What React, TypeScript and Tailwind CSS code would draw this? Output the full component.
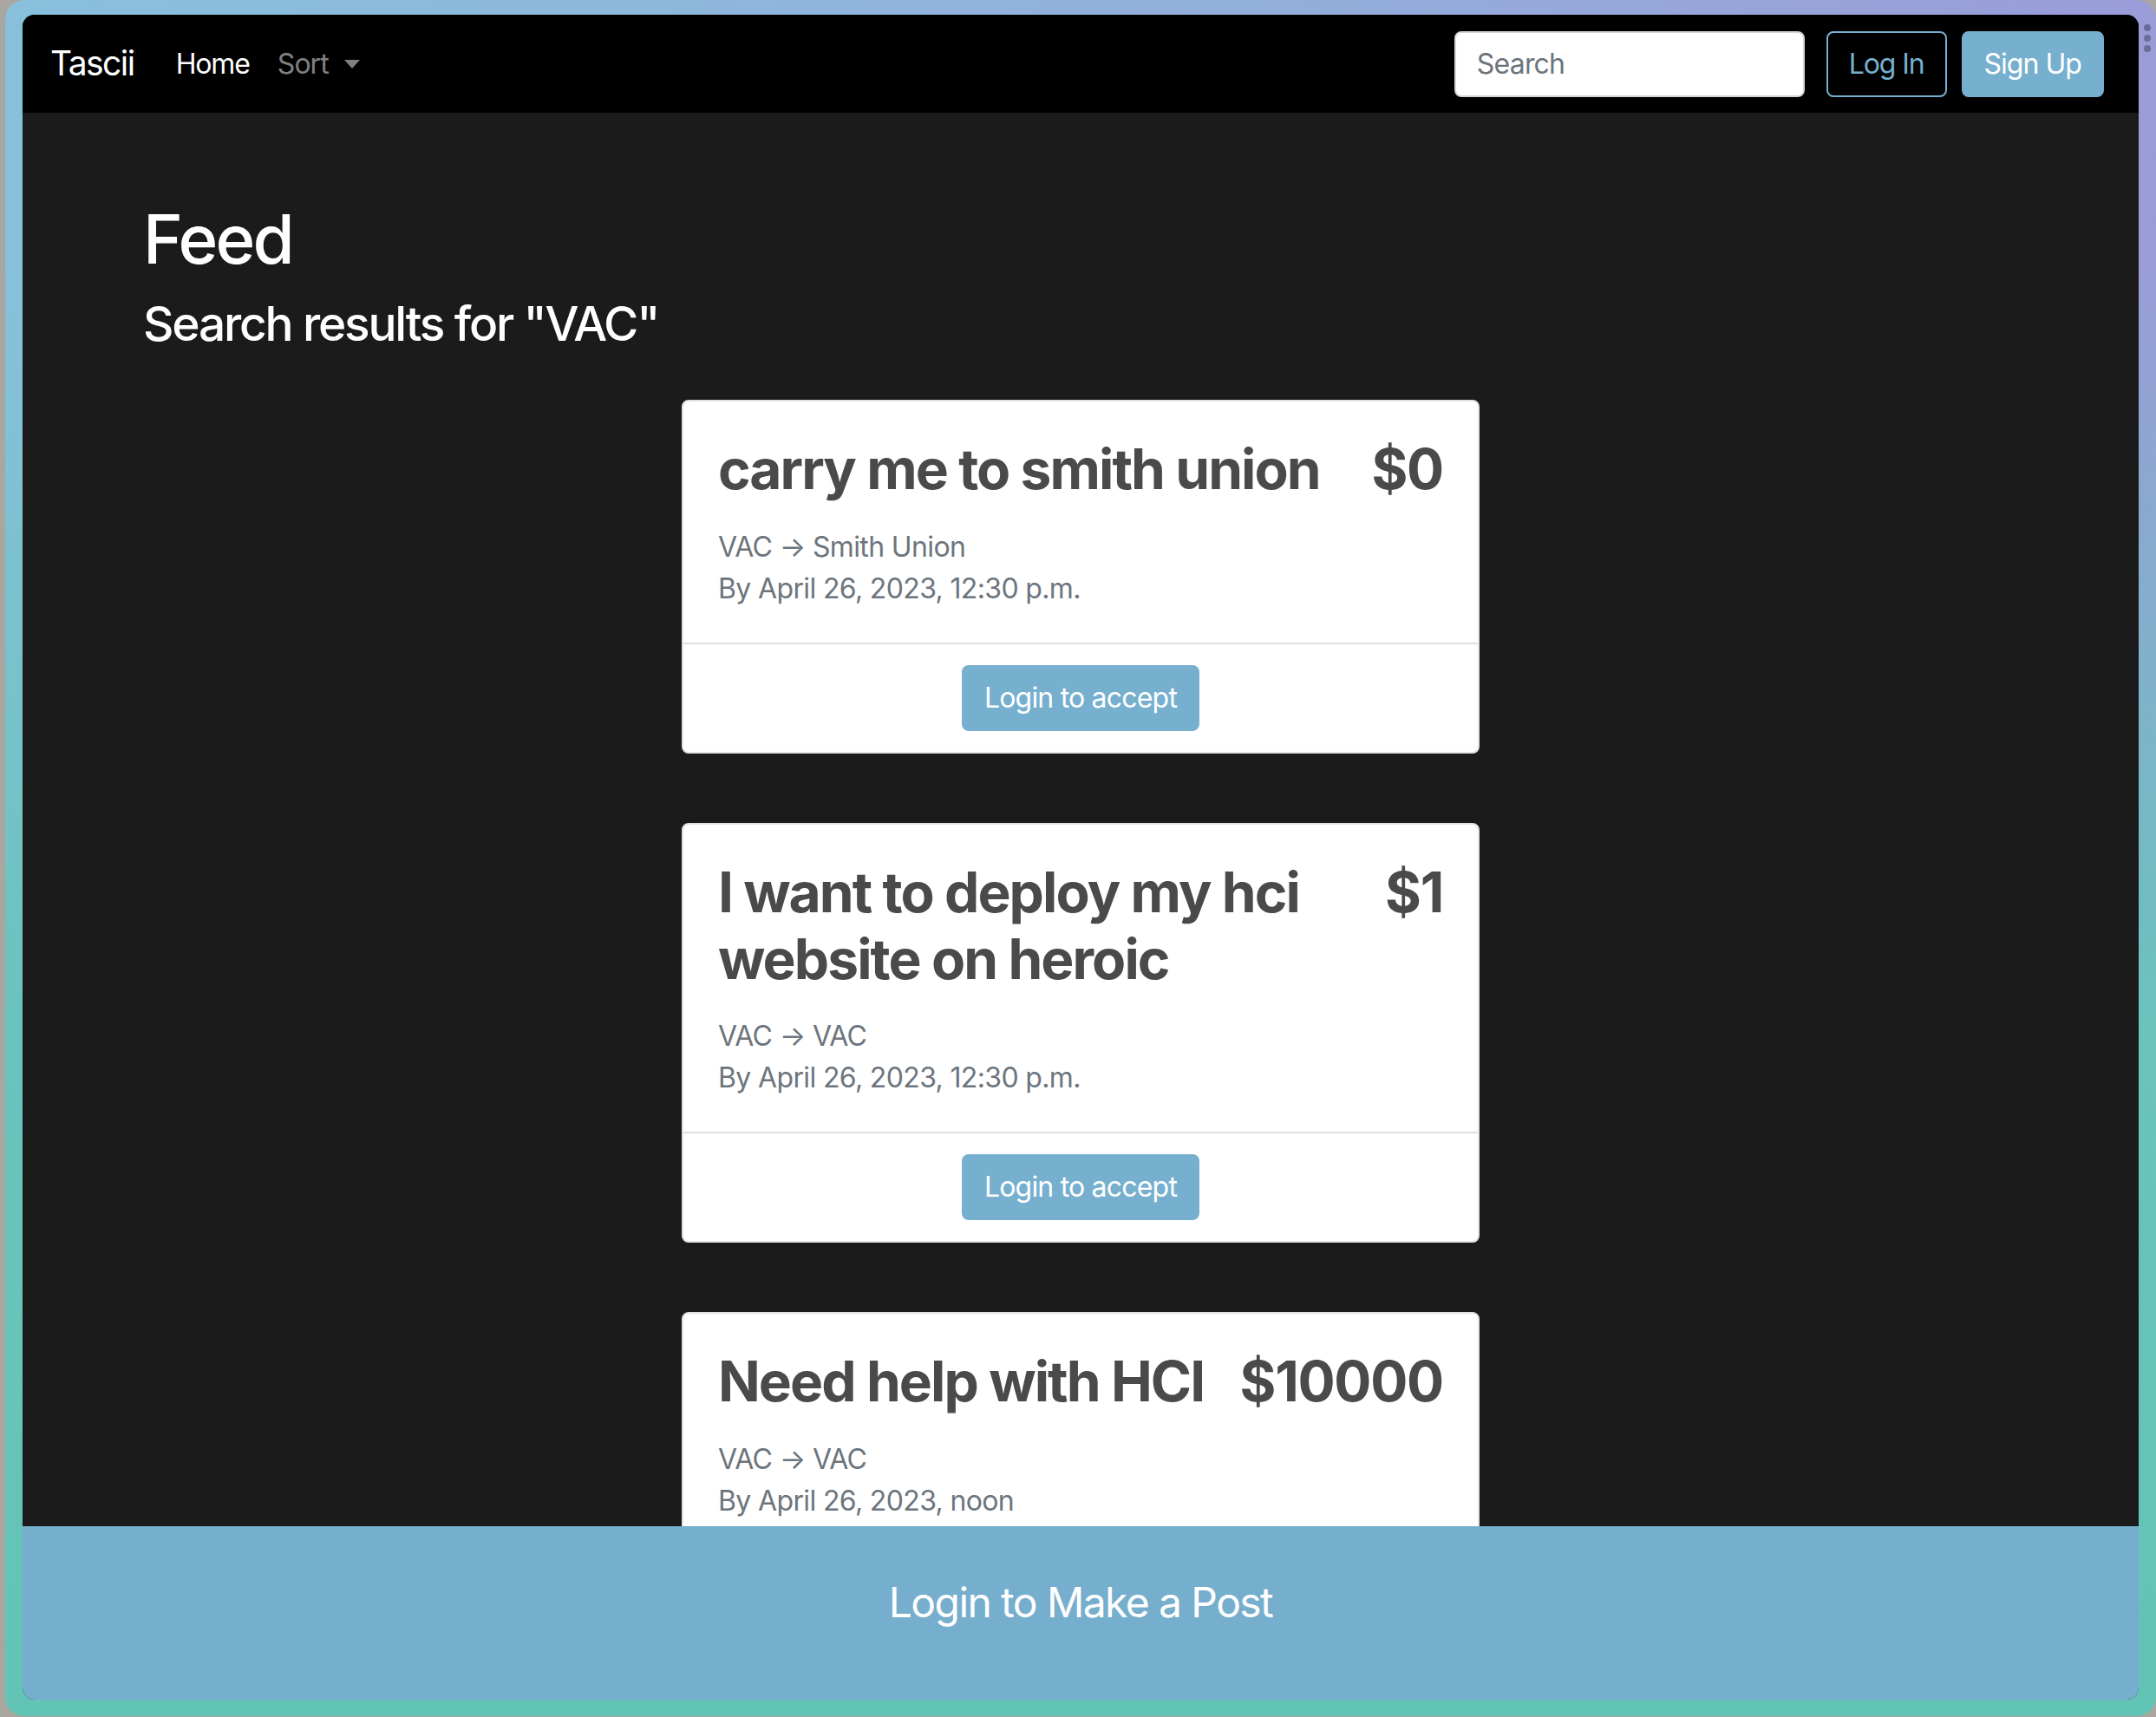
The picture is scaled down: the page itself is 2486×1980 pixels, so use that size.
import React from "react";

const posts = [
  {
    title: "carry me to smith union",
    price: "$0",
    from: "VAC",
    to: "Smith Union",
    by: "April 26, 2023, 12:30 p.m.",
  },
  {
    title: "I want to deploy my hci website on heroic",
    price: "$1",
    from: "VAC",
    to: "VAC",
    by: "April 26, 2023, 12:30 p.m.",
  },
  {
    title: "Need help with HCI",
    price: "$10000",
    from: "VAC",
    to: "VAC",
    by: "April 26, 2023, noon",
  },
];

function PostCard({ post }: { post: (typeof posts)[number] }) {
  return (
    <div className="w-[920px] shrink-0 rounded-lg border-2 border-[#e2e2e2] bg-white">
      <div className="px-[40px] pb-[38px] pt-[40px]">
        <div className="flex justify-between gap-[24px]">
          <h2 className="min-w-0 text-[64px] font-bold leading-[1.2] tracking-[-0.03em] text-[#4a4a4a]">
            {post.title}
          </h2>
          <h2 className="shrink-0 text-[64px] font-bold leading-[1.2] tracking-[-0.02em] text-[#4a4a4a]">
            {post.price}
          </h2>
        </div>
        <p className="mt-[27px] text-[32px] leading-[48px] tracking-[-0.02em] text-[#6c757d]">
          {post.from} → {post.to}
        </p>
        <p className="text-[32px] leading-[48px] tracking-[-0.02em] text-[#6c757d]">By {post.by}</p>
      </div>
      <div className="flex justify-center border-t-2 border-[#dfdfdf] py-[24px]">
        <button className="h-[76px] rounded-lg bg-[#77afcf] px-[26px] text-[32px] tracking-[-0.025em] text-white">
          Login to accept
        </button>
      </div>
    </div>
  );
}

export default function App() {
  return (
    <div className="h-[1980px] w-[2486px] bg-[#a9a6a0] pl-[6px] font-['Inter',sans-serif]">
      <div className="relative h-[1979px] w-[2480px] rounded-[22px] bg-[linear-gradient(to_bottom,transparent_15%,#6ac3bd_60%,#62c4b4),linear-gradient(to_right,#88c0dc,#93aedb_60%,#9a9cd8)] pb-[19px] pl-[20px] pr-[20px] pt-[17px]">
        {/* window handle dots */}
        <div className="absolute right-[6px] top-[28px] flex flex-col gap-[4px]">
          <span className="h-[8px] w-[8px] rounded-full bg-[#6a6d9c]" />
          <span className="h-[8px] w-[8px] rounded-full bg-[#6a6d9c]" />
          <span className="h-[8px] w-[8px] rounded-full bg-[#6a6d9c]" />
        </div>

        <div className="flex h-full w-full flex-col overflow-hidden rounded-[14px] bg-[#1b1b1b]">
          {/* Navbar */}
          <nav className="flex h-[113px] shrink-0 items-center justify-between bg-black pl-[32px] pr-[40px]">
            <div className="flex items-center">
              <span className="mr-[32px] text-[39px] tracking-[-0.04em] text-white">Tascii</span>
              <span className="px-[16px] text-[32px] tracking-[-0.035em] text-white">Home</span>
              <span className="flex items-center px-[16px] text-[32px] tracking-[-0.03em] text-[#808080]">
                Sort
                <span className="ml-[18px] inline-block border-x-[9px] border-t-[10px] border-x-transparent border-t-[#808080]" />
              </span>
            </div>
            <div className="flex items-center">
              <input
                placeholder="Search"
                className="h-[76px] w-[404px] rounded-lg border-2 border-[#ced4da] bg-white px-[24px] text-[32px] tracking-[-0.025em] outline-none placeholder:text-[#6c757d]"
              />
              <button className="ml-[25px] h-[76px] rounded-lg border-2 border-[#77afcf] px-[24px] text-[32px] tracking-[-0.035em] text-[#77afcf]">
                Log In
              </button>
              <button className="ml-[17px] h-[76px] rounded-lg border-2 border-[#77afcf] bg-[#77afcf] px-[24px] text-[32px] tracking-[-0.03em] text-white">
                Sign Up
              </button>
            </div>
          </nav>

          {/* Feed */}
          <main className="min-h-0 flex-1 overflow-hidden pl-[139px] pt-[98px]">
            <h1 className="text-[78px] font-medium leading-[1.23] tracking-[-0.035em] text-white">Feed</h1>
            <h3 className="mt-[16px] text-[55px] font-medium leading-[1.2] tracking-[-0.04em] text-white">
              Search results for "VAC"
            </h3>
            <div className="mt-[55px] flex flex-col items-center gap-[80px] pr-[139px]">
              {posts.map((post) => (
                <PostCard key={post.title} post={post} />
              ))}
            </div>
          </main>

          {/* Bottom bar */}
          <div className="flex h-[200px] shrink-0 items-center justify-center bg-[#76aecd] pb-[24px] text-[48px] tracking-[-0.033em] text-white">
            Login to Make a Post
          </div>
        </div>
      </div>
    </div>
  );
}
